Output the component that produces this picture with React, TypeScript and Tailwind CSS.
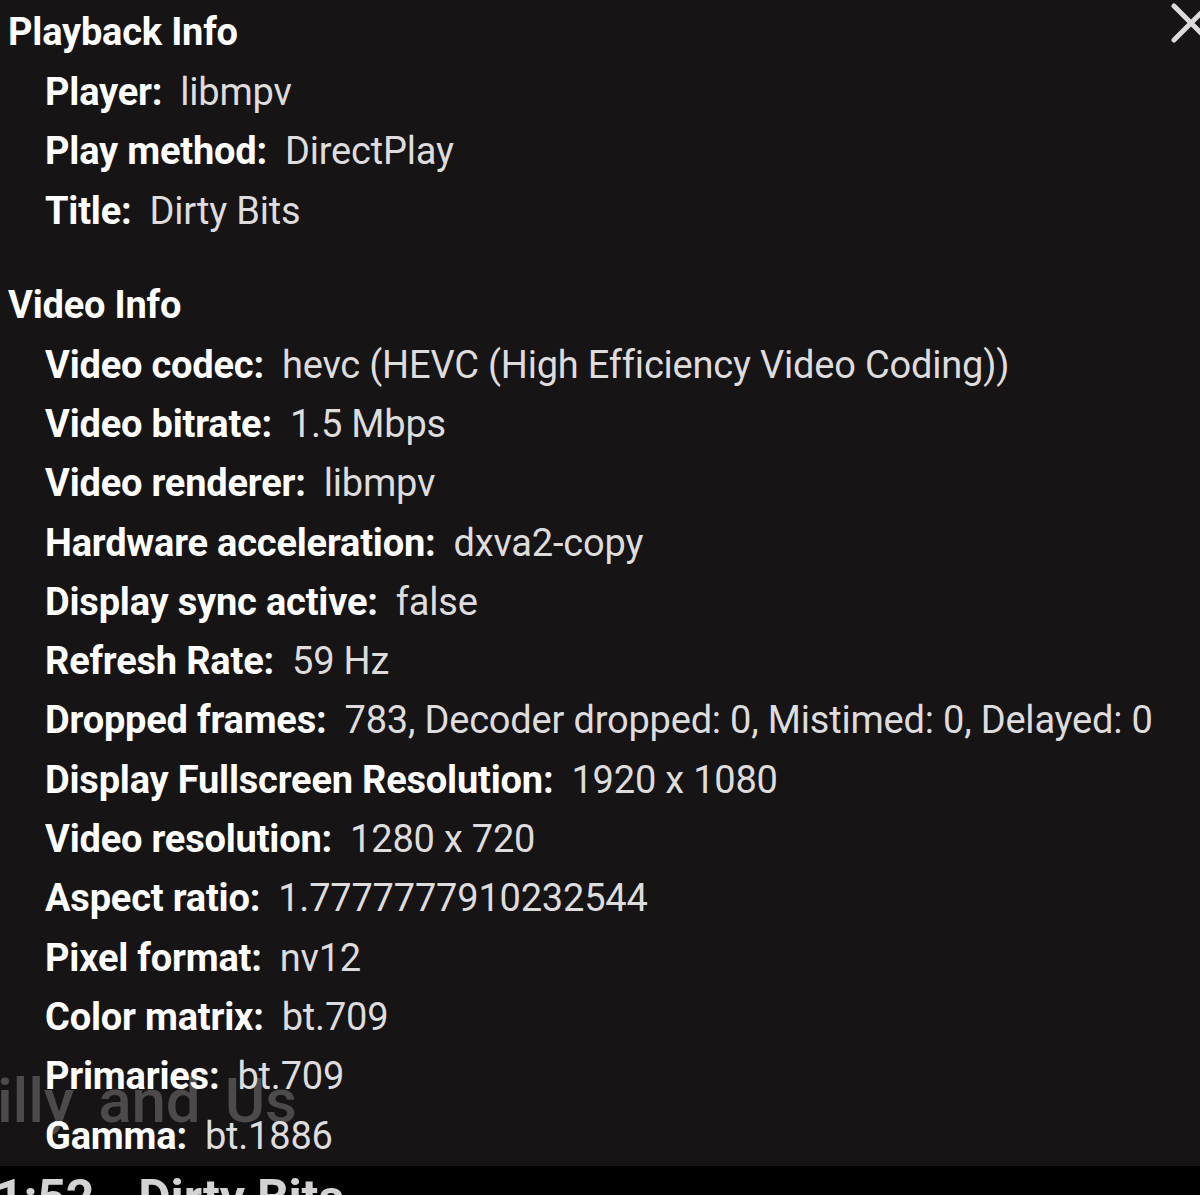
import React from "react";

const playback: [string, string][] = [
  ["Player:", "libmpv"],
  ["Play method:", "DirectPlay"],
  ["Title:", "Dirty Bits"],
];

const video: [string, string][] = [
  ["Video codec:", "hevc (HEVC (High Efficiency Video Coding))"],
  ["Video bitrate:", "1.5 Mbps"],
  ["Video renderer:", "libmpv"],
  ["Hardware acceleration:", "dxva2-copy"],
  ["Display sync active:", "false"],
  ["Refresh Rate:", "59 Hz"],
  ["Dropped frames:", "783, Decoder dropped: 0, Mistimed: 0, Delayed: 0"],
  ["Display Fullscreen Resolution:", "1920 x 1080"],
  ["Video resolution:", "1280 x 720"],
  ["Aspect ratio:", "1.7777777910232544"],
  ["Pixel format:", "nv12"],
  ["Color matrix:", "bt.709"],
  ["Primaries:", "bt.709"],
  ["Gamma:", "bt.1886"],
];

const Row = ({ label, value }: { label: string; value: string }) => (
  <div className="flex h-[59.65px] items-center whitespace-nowrap pl-[45px]">
    <span className="font-bold text-white">{label}</span>
    <span className="ml-[18px] text-[#dedcdd]">{value}</span>
  </div>
);

export default function App() {
  return (
    <div
      className="relative h-[1195px] w-[1200px] overflow-hidden bg-[#161415] text-[38px] tracking-[-0.2px]"
      style={{ fontFamily: "Roboto, 'Liberation Sans', sans-serif" }}
    >
      {/* title of the video showing through behind the overlay */}
      <div className="absolute left-[-3px] top-[1070px] text-[62px] font-medium leading-none text-[#4c4a4b] [word-spacing:9px]">
        illy and Us
      </div>
      <div className="absolute left-[1168px] top-0 text-[#dcdadb]">
        <svg width="46" height="46" viewBox="0 0 46 46">
          <path d="M6 6 L40 40 M40 6 L6 40" stroke="currentColor" strokeWidth="5" strokeLinecap="round" />
        </svg>
      </div>

      <div className="relative flex h-[1166px] flex-col pt-[3px]">
        <div className="flex h-[60px] items-center pl-[8px] font-bold text-white">Playback Info</div>
        {playback.map(([l, v]) => (
          <Row key={l} label={l} value={v} />
        ))}
        <div className="mt-[35px] flex h-[60px] items-center pl-[8px] font-bold text-white">Video Info</div>
        {video.map(([l, v]) => (
          <Row key={l} label={l} value={v} />
        ))}
      </div>

      <div className="h-[29px] bg-black pt-[4px] text-[50px] font-bold leading-[56px] text-[#d4d2d3]">
        <span className="ml-[-5px] whitespace-pre">1:52 - Dirty Bits</span>
      </div>
    </div>
  );
}
